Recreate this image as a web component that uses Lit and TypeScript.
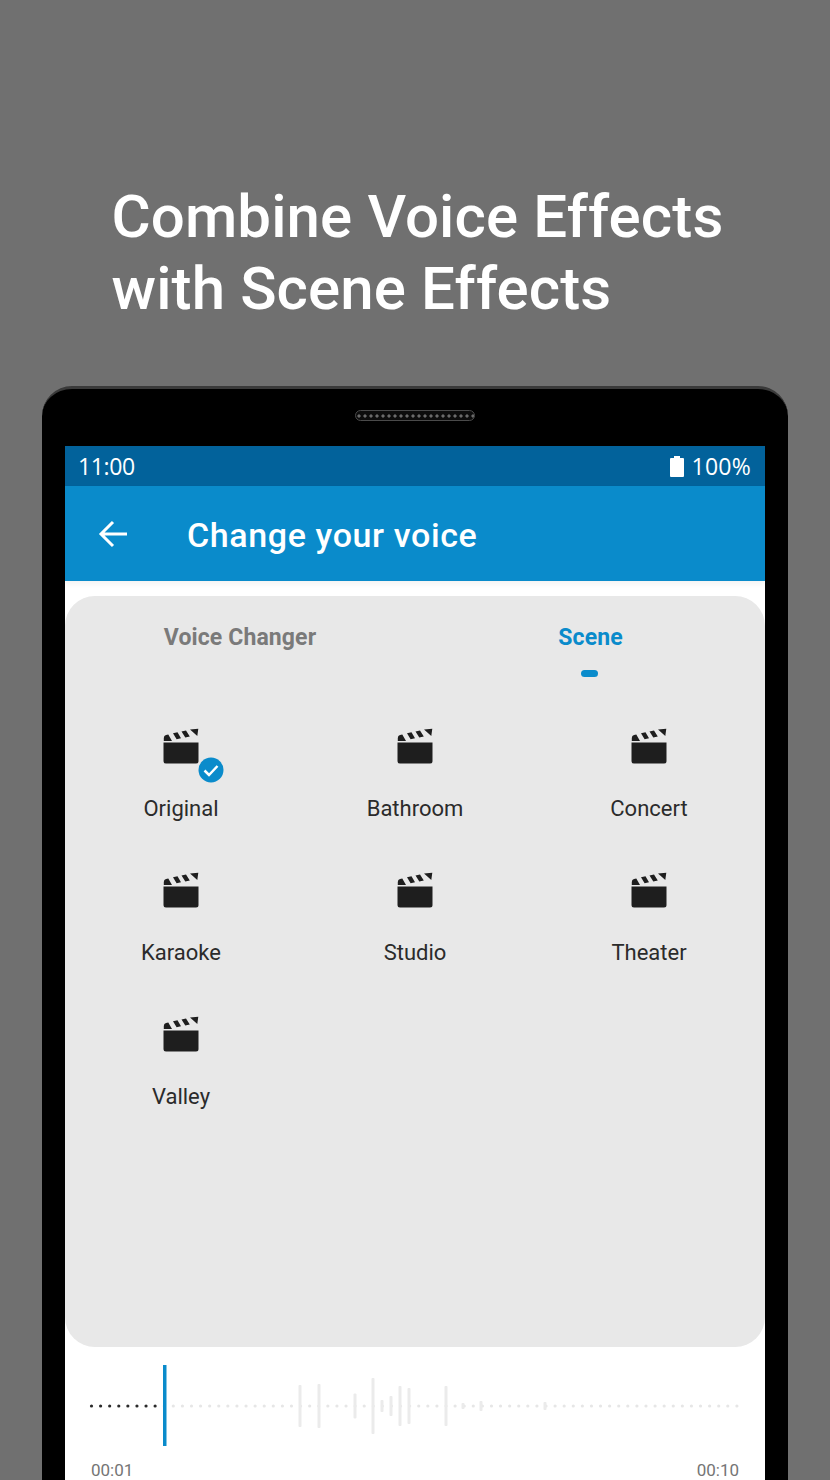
import { LitElement, html, css, svg } from "lit";
import { customElement } from "lit/decorators.js";

const ITEMS = ["Original", "Bathroom", "Concert", "Karaoke", "Studio", "Theater", "Valley"];

const BARS: Record<number, number> = {
  300: 42, 319: 44, 355: 25, 373: 56, 382: 12, 391: 20, 400: 40, 409: 36, 446: 40,
  481: 10, 463: 6, 545: 8,
};

function wave() {
  const parts = [];
  for (let i = 0; i < 72; i++) {
    const x = 91.5 + i * 9.09;
    const played = x < 160;
    const fill = played ? "#2a2a2a" : "#e6e6e6";
    parts.push(svg`<circle cx=${x} cy="41" r="1.6" fill=${fill}></circle>`);
  }
  for (const [x, h] of Object.entries(BARS)) {
    parts.push(svg`<rect x=${Number(x) - 1.5} y=${41 - h / 2} width="3" height=${h} rx="1" fill="#ebebeb"></rect>`);
  }
  return parts;
}

const clapper = html`<svg class="clap" viewBox="0 0 36 36" width="36" height="36">
  <path fill="#1e1e1e" d="M0.500 14.500H35.500V33a2.500 2.500 0 0 1-2.500 2.500H3A2.500 2.500 0 0 1 0.500 33Z"></path>
  <path fill="#1e1e1e" d="M0.800 10Q0.800 7.500 3 7L5.300 6.400 9 13H0.800ZM10 5.200 14.500 4.200 18 10.300 13.600 11.300ZM18.500 3.400 23 2.400 26.800 8.400 22.300 9.400ZM27 1.600 35.300 0.800 34.300 8Z"></path>
</svg>`;

@customElement("app-root")
export class AppRoot extends LitElement {
  static styles = css`
    :host { display: block; }
    .page {
      height: 1480px; overflow: hidden; background: #707070; color: #fff;
      font-family: Roboto, "Liberation Sans", sans-serif; box-sizing: border-box;
      padding-top: 181px;
    }
    h1 {
      margin: 0 0 65px 111.500px; font-size: 60px; line-height: 72px; font-weight: 500;
      letter-spacing: 0.120px; height: 140px;
    }
    .phone {
      margin: 0 42px; height: 1094px; box-sizing: border-box; background: #000;
      border-radius: 30px 30px 0 0; border-top: 3px solid #3a3a3a; padding: 0 23px;
      display: flex; flex-direction: column;
    }
    .speaker-row { height: 57px; flex: none; display: flex; justify-content: center; align-items: flex-start; padding-top: 21px; box-sizing: border-box; }
    .speaker {
      width: 120px; height: 11px; box-sizing: border-box; border: 1.500px solid #4a4a4a; border-radius: 6px;
      background: #0c0c0c radial-gradient(circle at 3px 5px, #6a6a6a 1.200px, transparent 2px) 0 0 / 6px 8px repeat-x;
    }
    .screen { flex: 1; background: #fff; display: flex; flex-direction: column; color: #212121; }
    .status {
      height: 40px; flex: none; background: #02629b; color: #fff; display: flex; align-items: center;
      justify-content: space-between; padding: 0 14px; font-family: "Open Sans", sans-serif; font-size: 23px; font-weight: 500;
    }
    .time { letter-spacing: -0.400px; margin-left: -1px; }
    .pct { letter-spacing: 0.250px; }
    .batt { display: flex; align-items: center; gap: 8px; }
    .bar {
      height: 95px; flex: none; background: #0a8bcb; color: #fff; display: flex; align-items: center;
      padding: 0 0 0 33px; box-sizing: border-box; font-size: 34px; font-weight: 500; letter-spacing: 0.620px;
      box-shadow: 0 3px 6px rgba(0, 0, 0, 0.05);
    }
    .bar svg { margin-right: 59px; }
    .title { padding-top: 3px; }
    .panel {
      margin-top: 15px; height: 751px; flex: none; background: #e8e8e8; border-radius: 30px;
    }
    .tabs { display: grid; grid-template-columns: 350px 350px; height: 85px; font-size: 23px; font-weight: 700; }
    .tab { display: flex; flex-direction: column; align-items: center; padding-top: 27px; box-sizing: border-box; color: #7a7a7a; letter-spacing: 0.120px; }
    .tab > span { line-height: 30px; }
    .tab.on { color: #0a8bcb; padding-left: 1px; }
    .grid { display: grid; grid-template-columns: repeat(3, 234px); grid-auto-rows: 144px; padding: 47px 0 0 0; margin-left: -1px; }
    .item { display: flex; flex-direction: column; align-items: center; font-size: 22px; }
    .ic { position: relative; width: 36px; height: 36px; margin-bottom: 30px; }
    .ic .clap { display: block; }
    .label { line-height: 30px; color: #2b2b2b; }
    .check { position: absolute; left: 35px; top: 29px; }
    .ind { width: 17px; height: 7px; border-radius: 4px; background: #0a8bcb; margin: 17px 0 0 -2px; }
    .wave { height: 93px; flex: none; display: block; margin-top: 18px; }
    .times {
      display: flex; justify-content: space-between; padding: 0 26px; font-size: 17px; color: #757575; line-height: 24px;
    }
  `;

  render() {
    return html`<div class="page">
      <h1>Combine Voice Effects<br />with Scene Effects</h1>
      <div class="phone">
        <div class="speaker-row"><div class="speaker"></div></div>
        <div class="screen">
          <div class="status">
            <span class="time">11:00</span>
            <span class="batt"
              ><svg width="14" height="21" viewBox="0 0 14 21"><path fill="#fff" d="M4 0h6v2h3a1 1 0 0 1 1 1v17a1 1 0 0 1-1 1H1a1 1 0 0 1-1-1V3a1 1 0 0 1 1-1h3Z"></path></svg
              ><span class="pct">100%</span></span
            >
          </div>
          <div class="bar">
            <svg width="30" height="30" viewBox="0 0 30 30" fill="none" stroke="#fff" stroke-width="3"><path d="M29 15H3M15 3 3 15l12 12"></path></svg>
            <span class="title">Change your voice</span>
          </div>
          <div class="panel">
            <div class="tabs">
              <div class="tab"><span>Voice Changer</span></div>
              <div class="tab on"><span>Scene</span><div class="ind"></div></div>
            </div>
            <div class="grid">
              ${ITEMS.map(
                (n, i) => html`<div class="item">
                  <div class="ic">
                    ${clapper}
                    ${i === 0
                      ? html`<svg class="check" width="26" height="26" viewBox="0 0 26 26"><circle cx="13" cy="13" r="12.500" fill="#0a8bcb"></circle><path d="M6.500 13.500 11 18l8.500-9" fill="none" stroke="#fff" stroke-width="2.500"></path></svg>`
                      : ""}
                  </div>
                  <div class="label">${n}</div>
                </div>`
              )}
            </div>
          </div>
          <svg class="wave" viewBox="65 0 700 93" width="700" height="93">
            ${wave()}
            <rect x="163" y="0" width="3.500" height="81" fill="#0a8bcb"></rect>
          </svg>
          <div class="times"><span>00:01</span><span>00:10</span></div>
        </div>
      </div>
    </div>`;
  }
}
